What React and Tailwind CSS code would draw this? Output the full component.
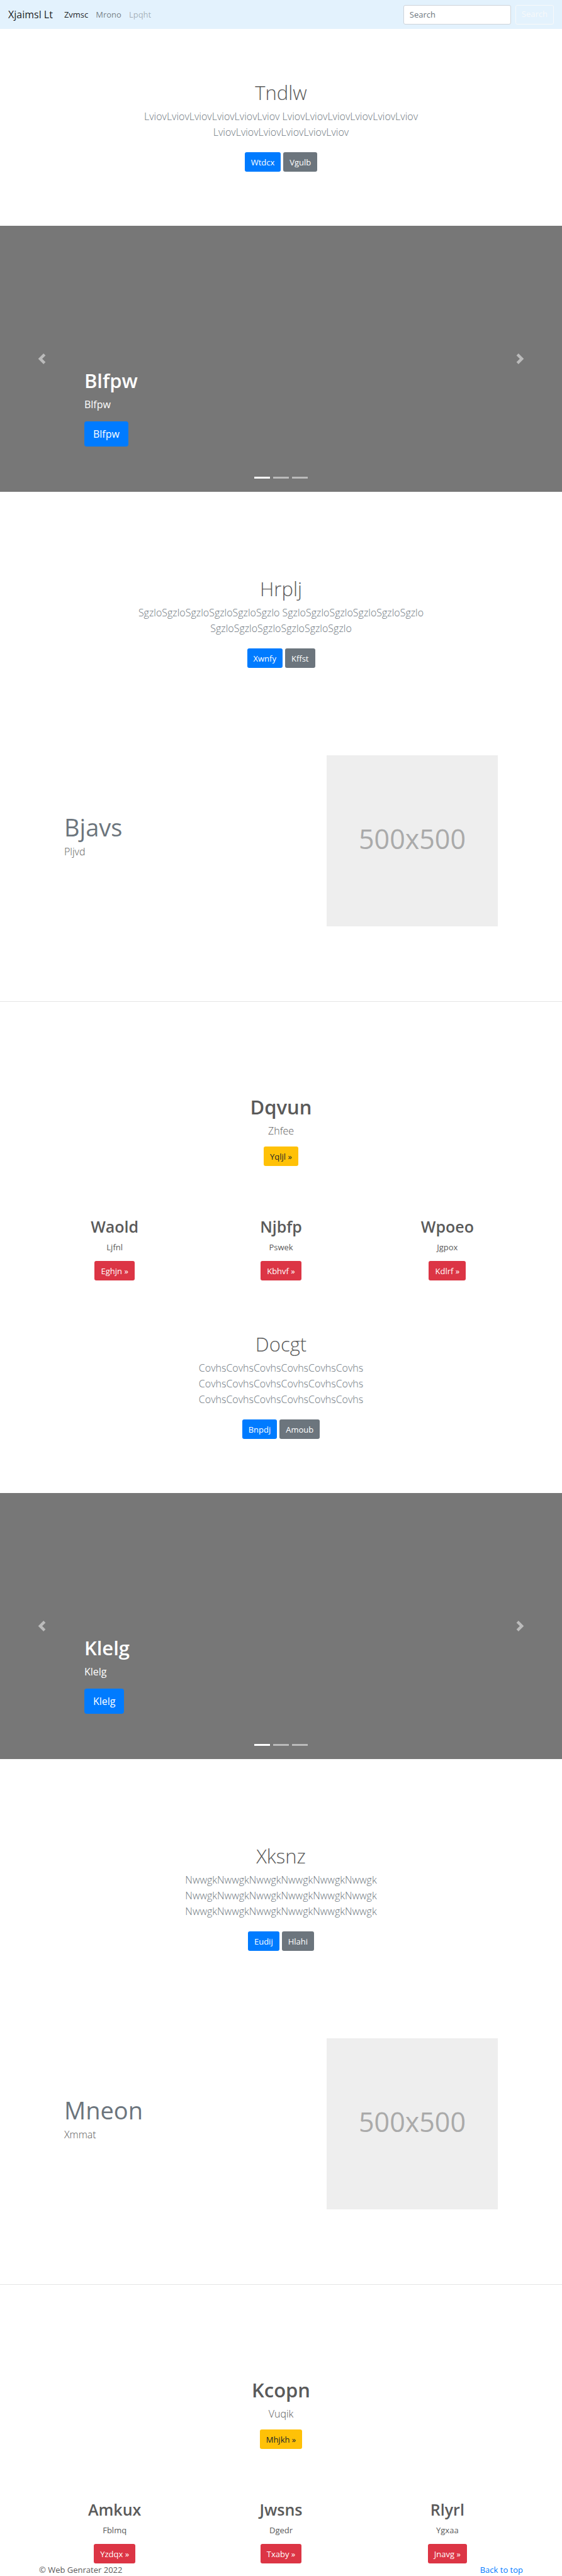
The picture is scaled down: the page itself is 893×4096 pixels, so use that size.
import React from "react";

const BUTTON_TONES = {
  primary: "bg-[#007bff] text-white",
  secondary: "bg-[#6c757d] text-white",
  warning: "bg-[#ffc107] text-[#212529]",
  danger: "bg-[#dc3545] text-white",
};

function ButtonLink({ tone, children }) {
  return (
    <a
      href="#"
      className={`inline-flex h-[31px] items-center rounded-[3px] px-[10px] text-[13px] leading-5 ${BUTTON_TONES[tone]}`}
    >
      {children}
    </a>
  );
}

function NavBar() {
  return (
    <nav className="flex h-[46px] items-center bg-[#e3f2fd] px-[13px]">
      <a href="#" className="mr-[18px] text-[16px] leading-6 text-black/90">
        Xjaimsl Lt
      </a>
      <ul className="flex gap-3 text-[13px] leading-5">
        <li>
          <a href="#" className="text-black/90">Zvmsc</a>
        </li>
        <li>
          <a href="#" className="text-black/50">Mrono</a>
        </li>
        <li>
          <a href="#" className="text-black/30">Lpqht</a>
        </li>
      </ul>
      <form className="ml-auto flex gap-[7px]" onSubmit={(e) => e.preventDefault()}>
        <input
          type="search"
          aria-label="Search"
          placeholder="Search"
          className="h-[31px] w-[171px] rounded-[3px] border border-[#ced4da] bg-white px-[9px] text-[13px] text-[#495057] placeholder:text-[#6c757d]"
        />
        <button
          type="submit"
          className="h-[31px] rounded-[3px] border border-[#f8f9fa] px-[9px] text-[13px] text-[#f8f9fa]"
        >
          Search
        </button>
      </form>
    </nav>
  );
}

function Intro({ title, word, primary, secondary }) {
  return (
    <section className="flex flex-col items-center px-4 pt-[81px] pb-[86px] text-center">
      <h1 className="text-[31px] leading-10 font-light">{title}</h1>
      <p className="mt-[6px] max-w-[480px] text-[16px] leading-[25px] font-light text-[#6c757d]">
        {[word, word, word].map((w) => w.repeat(6)).join(" ")}
      </p>
      <div className="mt-[19px] flex gap-1">
        <ButtonLink tone="primary">{primary}</ButtonLink>
        <ButtonLink tone="secondary">{secondary}</ButtonLink>
      </div>
    </section>
  );
}

function CarouselArrow({ label, path, side }) {
  return (
    <button
      type="button"
      aria-label={label}
      className={`absolute inset-y-0 flex w-[15%] items-center justify-center text-white opacity-50 ${side}`}
    >
      <svg viewBox="0 0 8 8" className="size-[17px]" fill="currentColor" aria-hidden="true">
        <path d={path} />
      </svg>
    </button>
  );
}

function Carousel({ word }) {
  return (
    <section className="relative mb-[53px] flex h-[423px] flex-col items-start justify-end bg-[#777] px-[15%] pb-[72px] text-white">
      <h2 className="text-[31px] leading-10 font-semibold">{word}</h2>
      <p className="mt-[6px] text-[16px] leading-[25px]">{word}</p>
      <a
        href="#"
        className="mt-[14px] flex h-10 items-center rounded-[4px] bg-[#007bff] px-[14px] text-[16px] leading-[25px]"
      >
        {word}
      </a>
      <CarouselArrow
        label="Previous"
        side="left-0"
        path="M5.25 0l-4 4 4 4 1.5-1.5-2.5-2.5 2.5-2.5-1.5-1.5z"
      />
      <CarouselArrow
        label="Next"
        side="right-0"
        path="M2.75 0l-1.5 1.5 2.5 2.5-2.5 2.5 1.5 1.5 4-4-4-4z"
      />
      <ol className="absolute inset-x-0 bottom-[21px] flex justify-center gap-[5px]">
        <li className="h-[3px] w-[25px] bg-white" />
        <li className="h-[3px] w-[25px] bg-white/50" />
        <li className="h-[3px] w-[25px] bg-white/50" />
      </ol>
    </section>
  );
}

function Featurette({ title, text }) {
  return (
    <section className="flex items-center justify-between border-b border-black/10 px-[102px] pt-[53px] pb-[119px]">
      <div className="pb-[13px]">
        <h2 className="text-[38px] leading-[41px] text-[#6c757d]">{title}</h2>
        <p className="mt-[6px] text-[16px] leading-[25px] font-light">{text}</p>
      </div>
      <div className="flex size-[272px] items-center justify-center bg-[#eee] pb-[6px] text-[43px] text-[#aaa]">
        500x500
      </div>
    </section>
  );
}

function Features({ title, text, action, items }) {
  return (
    <section className="pt-[147px] text-center">
      <h2 className="text-[31px] leading-10 font-semibold">{title}</h2>
      <p className="mt-[6px] text-[16px] leading-[25px] font-light">{text}</p>
      <div className="mt-3 flex justify-center">
        <ButtonLink tone="warning">{action} »</ButtonLink>
      </div>
      <div className="grid grid-cols-3 px-[50px] pt-[80px]">
        {items.map((item) => (
          <div key={item.title} className="flex flex-col items-center">
            <h3 className="text-[25px] leading-8 font-semibold">{item.title}</h3>
            <p className="mt-[7px] mb-3 text-[13px] leading-5">{item.text}</p>
            <ButtonLink tone="danger">{item.action} »</ButtonLink>
          </div>
        ))}
      </div>
    </section>
  );
}

export default function App() {
  return (
    <div className="bg-white font-['Open_Sans','Noto_Sans',sans-serif] text-[#5a5a5a]">
      <NavBar />
      <main>
        <Intro title="Tndlw" word="Lviov" primary="Wtdcx" secondary="Vgulb" />
        <Carousel word="Blfpw" />
        <Intro title="Hrplj" word="Sgzlo" primary="Xwnfy" secondary="Kffst" />
        <Featurette title="Bjavs" text="Pljvd" />
        <Features
          title="Dqvun"
          text="Zhfee"
          action="Yqljl"
          items={[
            { title: "Waold", text: "Ljfnl", action: "Eghjn" },
            { title: "Njbfp", text: "Pswek", action: "Kbhvf" },
            { title: "Wpoeo", text: "Jgpox", action: "Kdlrf" },
          ]}
        />
        <Intro title="Docgt" word="Covhs" primary="Bnpdj" secondary="Amoub" />
        <Carousel word="Klelg" />
        <Intro title="Xksnz" word="Nwwgk" primary="Eudij" secondary="Hlahi" />
        <Featurette title="Mneon" text="Xmmat" />
        <Features
          title="Kcopn"
          text="Vuqik"
          action="Mhjkh"
          items={[
            { title: "Amkux", text: "Fblmq", action: "Yzdqx" },
            { title: "Jwsns", text: "Dgedr", action: "Txaby" },
            { title: "Rlyrl", text: "Ygxaa", action: "Jnavg" },
          ]}
        />
      </main>
      <footer className="flex justify-between px-[62px] text-[13px] leading-5">
        <p>© Web Genrater 2022</p>
        <a href="#" className="text-[#007bff]">Back to top</a>
      </footer>
    </div>
  );
}
